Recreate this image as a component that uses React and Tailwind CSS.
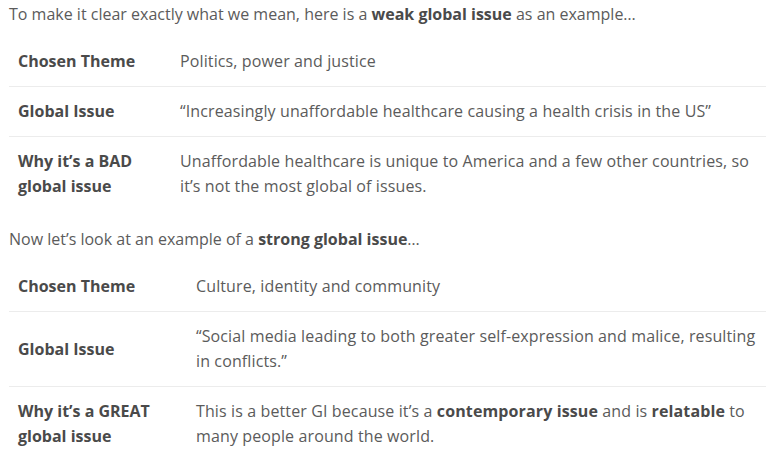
import React from 'react';

const weakRows = [
  { label: 'Chosen Theme', value: 'Politics, power and justice' },
  { label: 'Global Issue', value: '“Increasingly unaffordable healthcare causing a health crisis in the US”' },
  { label: <>Why it’s a BAD<br />global issue</>, value: 'Unaffordable healthcare is unique to America and a few other countries, so it’s not the most global of issues.' },
];

const strongRows = [
  { label: 'Chosen Theme', value: 'Culture, identity and community' },
  { label: 'Global Issue', value: '“Social media leading to both greater self-expression and malice, resulting in conflicts.”' },
  {
    label: <>Why it’s a GREAT<br />global issue</>,
    value: <>This is a better GI because it’s a <b className="font-bold text-[#4a4a4a]">contemporary issue</b> and is <b className="font-bold text-[#4a4a4a]">relatable</b> to many people around the world.</>,
  },
];

const IssueTable = ({ rows, labelWidth }) => (
  <table className="w-[757px] table-fixed border-collapse mb-4">
    <colgroup>
      <col className={labelWidth} />
      <col />
    </colgroup>
    <tbody>
      {rows.map((row, i) => (
        <tr key={i} className={i < rows.length - 1 ? 'border-b border-[#ececec]' : ''}>
          <td className="px-[9px] py-3 align-middle font-bold text-[#4a4a4a]">{row.label}</td>
          <td className="px-[9px] py-3 align-middle tracking-[0.12px]">{row.value}</td>
        </tr>
      ))}
    </tbody>
  </table>
);

export default function App() {
  return (
    <div className="w-[772px] h-[454px] overflow-hidden bg-white pl-[9px] pt-[2px] text-[16px] leading-[25px] text-[#5b5b5b] font-['Open_Sans',sans-serif]">
      <p className="mb-[10px]">
        To make it clear exactly what we mean, here is a <b className="font-bold text-[#4a4a4a]">weak global issue</b> as an example…
      </p>
      <IssueTable rows={weakRows} labelWidth="w-[162px]" />
      <p className="mb-[10px]">
        Now let’s look at an example of a <b className="font-bold text-[#4a4a4a]">strong global issue</b>…
      </p>
      <IssueTable rows={strongRows} labelWidth="w-[178px]" />
    </div>
  );
}
